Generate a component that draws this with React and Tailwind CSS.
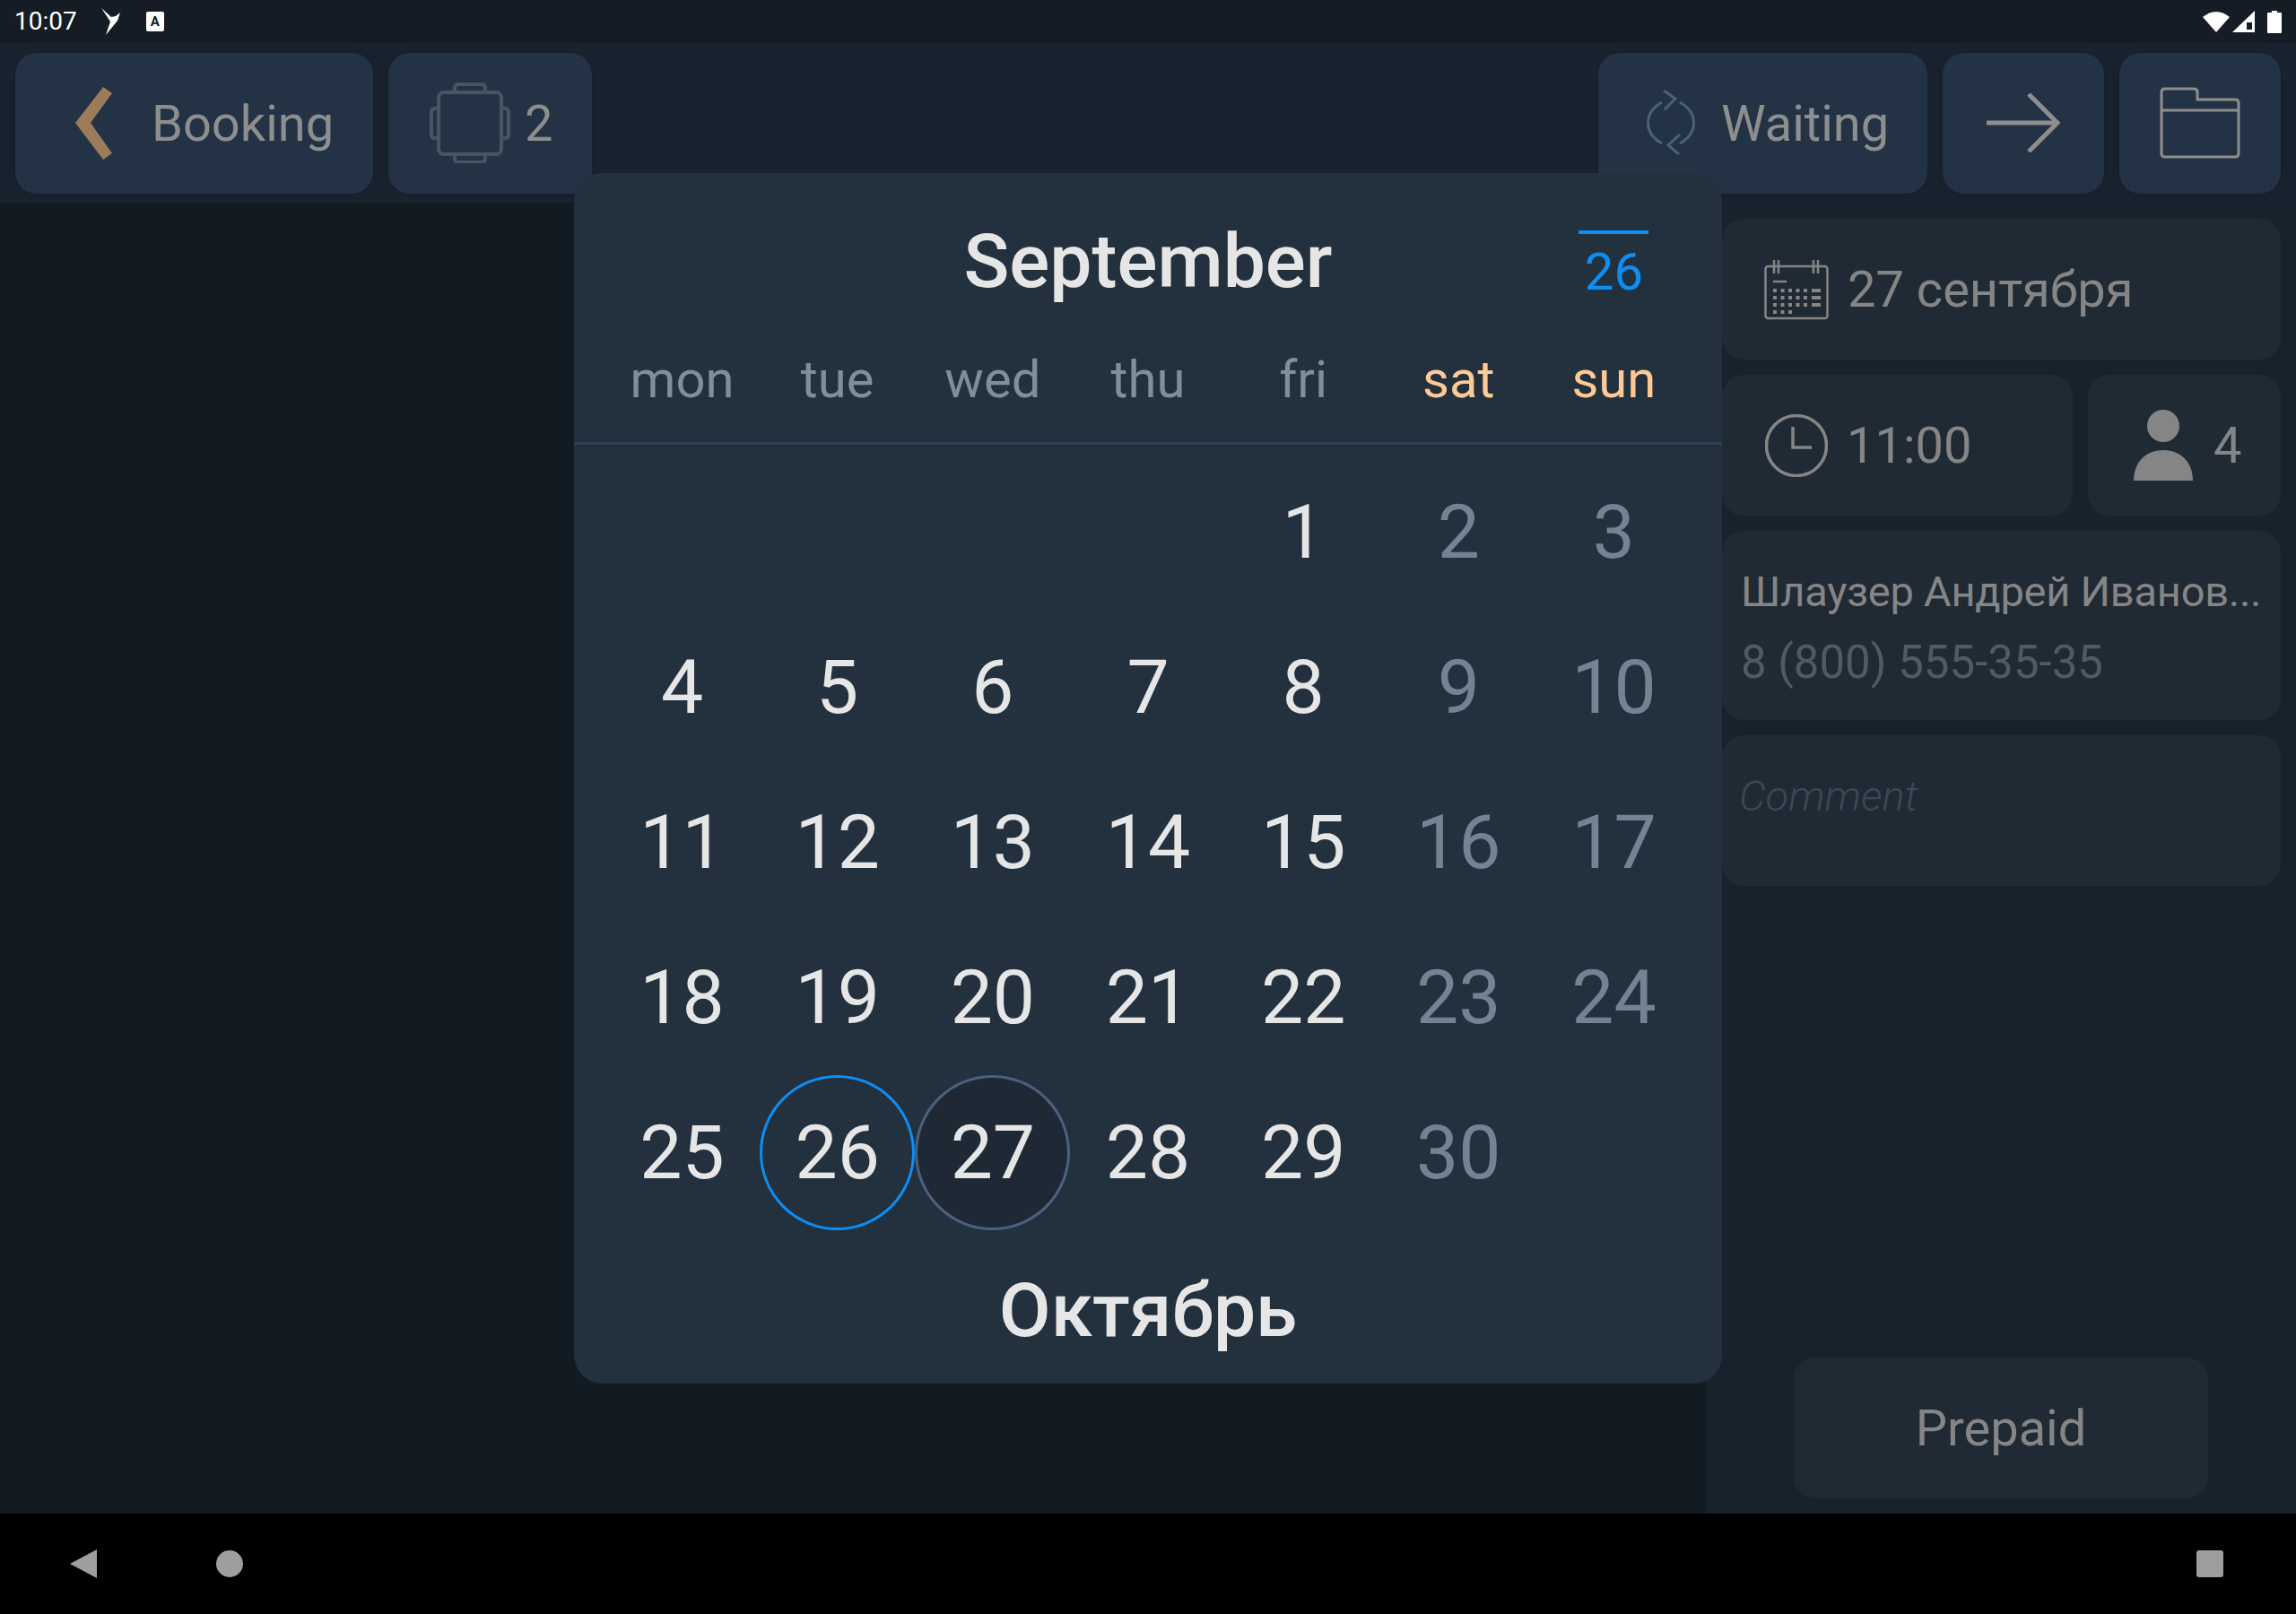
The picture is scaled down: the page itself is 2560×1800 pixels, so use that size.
const weekdays = ["mon", "tue", "wed", "thu", "fri", "sat", "sun"];

// september starts on friday, so four empty cells first
const days = [null, null, null, null];
for (let d = 1; d <= 30; d++) days.push(d);

function BirdIcon() {
  return (
    <svg width="22" height="30" viewBox="0 0 22 30" className="fill-white">
      <path d="M0 0 L11 10 L16 9 L21 5 L18 14 L5 30 L10 15 Z" />
    </svg>
  );
}

function KeyboardBadge() {
  return (
    <div className="flex h-[22px] w-[20px] items-center justify-center rounded-[2px] bg-white text-[15px] leading-none font-bold text-[#151c26]">
      A
    </div>
  );
}

function WifiIcon() {
  return (
    <svg width="30" height="24" viewBox="0 0 30 24" className="fill-white">
      <path d="M15 24 L0 7 Q15 -5 30 7 Z" />
    </svg>
  );
}

function SignalIcon() {
  return (
    <svg width="25" height="24" viewBox="0 0 25 24">
      <path d="M25 0 V24 H0 Z" fill="#fff" />
      <path d="M16 13 H22 V21 H16 Z" fill="#151c26" />
    </svg>
  );
}

function BatteryIcon() {
  return (
    <svg width="16" height="25" viewBox="0 0 16 25" className="fill-white">
      <path d="M5 0 H11 V2 H15 Q16 2 16 3 V24 Q16 25 15 25 H1 Q0 25 0 24 V3 Q0 2 1 2 H5 Z" />
    </svg>
  );
}

function ChevronIcon() {
  return (
    <svg width="41" height="81" viewBox="0 0 41 81" className="fill-[#9b7b5a]">
      <path d="M31 0 L41 7 L17 40 L41 74 L31 81 L0 40 Z" />
    </svg>
  );
}

function TableIcon() {
  return (
    <svg width="90" height="90" viewBox="0 0 90 90" fill="none" stroke="#4a5364" strokeWidth="4">
      <rect x="10" y="11" width="70" height="69" rx="6" />
      <path d="M28 10 V6 Q28 2 32 2 H58 Q62 2 62 6 V10" />
      <path d="M28 81 V85 Q28 89 32 89 H58 Q62 89 62 85 V81" />
      <path d="M9 29 H6 Q2 29 2 33 V58 Q2 62 6 62 H9" />
      <path d="M81 29 H84 Q88 29 88 33 V58 Q88 62 84 62 H81" />
    </svg>
  );
}

function SyncIcon() {
  return (
    <svg width="54" height="74" viewBox="0 0 54 74" fill="none" stroke="#4a6078" strokeWidth="3">
      <path d="M17 14 C-3.7 26 -3.7 48 17 60" />
      <path d="M37 14 C57.7 26 57.7 48 37 60" />
      <path d="M19 1 L32 10 L20 22" />
      <path d="M37 50 L24 62 L36 72" />
    </svg>
  );
}

function ArrowIcon() {
  return (
    <svg width="82" height="66" viewBox="0 0 82 66" fill="none" stroke="#8e8e8e" strokeWidth="5">
      <path d="M0 33 H78" />
      <path d="M47 1 L79 33 L47 65" />
    </svg>
  );
}

function FolderIcon() {
  return (
    <svg width="90" height="80" viewBox="0 0 90 80" fill="none" stroke="#8e8e8e" strokeWidth="3">
      <path d="M2 6 Q2 2 6 2 H38 Q42 2 42 6 V14 H84 Q88 14 88 18 V74 Q88 78 84 78 H6 Q2 78 2 74 Z" />
      <path d="M2 26 H88" />
    </svg>
  );
}

function CalendarIcon() {
  const rows = [0, 1, 2];
  const cols = [0, 1, 2, 3, 4];
  return (
    <svg width="72" height="68" viewBox="0 0 72 68" fill="none" stroke="#858585" strokeWidth="2.5">
      <rect x="1.5" y="8" width="69" height="58" rx="3" />
      <path d="M11 1 V16 M16 1 V16 M55 1 V16 M60 1 V16" />
      <path d="M10 25 H25" />
      {rows.map((r) =>
        cols.map((c) => (
          <rect key={`${r}-${c}`} x={10 + c * 8.5} y={33 + r * 8} width="4" height="4" fill="#858585" stroke="none" />
        ))
      )}
      {rows.map((r) => (
        <rect key={r} x="53" y={33 + r * 8} width="10" height="4" fill="#858585" stroke="none" />
      ))}
      {[0, 1, 2].map((c) => (
        <rect key={c} x={10 + c * 8.5} y="57" width="4" height="4" fill="#858585" stroke="none" />
      ))}
    </svg>
  );
}

function ClockIcon() {
  return (
    <svg width="70" height="70" viewBox="0 0 70 70" fill="none" stroke="#858585" strokeWidth="3.5">
      <circle cx="35" cy="35" r="33.5" />
      <path d="M31 14 V37 H52" />
    </svg>
  );
}

function PersonIcon() {
  return (
    <svg width="66" height="79" viewBox="0 0 66 79" className="fill-[#858585]">
      <ellipse cx="33" cy="18" rx="18" ry="18" />
      <path d="M0 79 C0 58 14 45 33 45 C52 45 66 58 66 79 Z" />
    </svg>
  );
}

function TopButton({ className, children }) {
  return (
    <div className={`flex h-[157px] items-center rounded-[24px] bg-[#233345] text-[56px] text-[#8e8e8e] shadow-[0_0_8px_rgba(0,0,0,0.15)] ${className}`}>
      {children}
    </div>
  );
}

function Day({ day, index }) {
  if (day === null) return <div className="h-[173px]" />;
  // saturday and sunday columns are dimmed
  const weekend = index % 7 >= 5;
  let ring = "";
  if (day === 26) ring = "border-[3px] border-[#0d8ef5]";
  if (day === 27) ring = "border-[3px] border-[#4a6280] bg-[#1f2935]";
  return (
    <div className={`flex h-[173px] items-center justify-center rounded-full text-[84px] ${weekend ? "text-[#748394]" : "text-[#e6e6e6]"} ${ring}`}>
      {day}
    </div>
  );
}

export default function App() {
  return (
    <div className="relative flex h-[1800px] w-[2560px] flex-col overflow-hidden bg-black font-['Roboto',sans-serif]">
      {/* status bar */}
      <div className="flex h-[48px] items-center bg-[#151c26] pr-[16px] pl-[16px] text-white">
        <span className="text-[28px]">10:07</span>
        <div className="ml-[27px]"><BirdIcon /></div>
        <div className="ml-[28px]"><KeyboardBadge /></div>
        <div className="ml-auto flex items-center gap-[3px]">
          <WifiIcon />
          <SignalIcon />
          <div className="ml-[11px]"><BatteryIcon /></div>
        </div>
      </div>

      {/* top bar */}
      <div className="flex h-[178px] items-center justify-between bg-[#18232f] px-[17px]">
        <div className="flex gap-[17px]">
          <TopButton className="w-[399px] pl-[67px]">
            <ChevronIcon />
            <span className="ml-[44px] pt-[2px]">Booking</span>
          </TopButton>
          <TopButton className="w-[227px] pl-[46px]">
            <TableIcon />
            <span className="ml-[16px] pt-[2px]">2</span>
          </TopButton>
        </div>
        <div className="flex gap-[17px]">
          <TopButton className="w-[367px] pl-[54px]">
            <SyncIcon />
            <span className="ml-[29px] pt-[2px]">Waiting</span>
          </TopButton>
          <TopButton className="w-[180px] justify-center">
            <ArrowIcon />
          </TopButton>
          <TopButton className="w-[180px] justify-center">
            <FolderIcon />
          </TopButton>
        </div>
      </div>

      {/* content */}
      <div className="flex h-[1462px]">
        <div className="w-[1902px] bg-[#121a22]" />
        <div className="flex flex-1 flex-col bg-[#18222c] pt-[18px] pl-[18px] text-[#858585]">
          <div className="flex h-[157px] w-[623px] items-center rounded-[24px] bg-[#202a35] pl-[47px] text-[56px]">
            <CalendarIcon />
            <span className="ml-[21px]">27 сентября</span>
          </div>
          <div className="mt-[17px] flex w-[623px] gap-[17px] text-[56px]">
            <div className="flex h-[157px] w-[391px] items-center rounded-[24px] bg-[#202a35] pl-[48px]">
              <ClockIcon />
              <span className="ml-[21px]">11:00</span>
            </div>
            <div className="flex h-[157px] w-[215px] items-center rounded-[24px] bg-[#202a35] pl-[51px]">
              <PersonIcon />
              <span className="ml-[23px]">4</span>
            </div>
          </div>
          <div className="mt-[17px] flex h-[211px] w-[623px] flex-col justify-center gap-[7px] rounded-[24px] bg-[#202a35] pt-[3px] pl-[21px] leading-[72px]">
            <span className="text-[47px] tracking-[-0.25px]">Шлаузер Андрей Иванов...</span>
            <span className="text-[51px] text-[#4f5a64]">8 (800) 555-35-35</span>
          </div>
          <div className="mt-[17px] h-[168px] w-[623px] rounded-[24px] bg-[#202a35] pt-[32px] pl-[19px] text-[47px] leading-[72px] font-light text-[#3c4855] italic">
            Comment
          </div>
          <div className="mt-auto mb-[17px] ml-[80px] flex h-[157px] w-[462px] items-center justify-center rounded-[24px] bg-[#202a35] text-[56px]">
            Prepaid
          </div>
        </div>
      </div>

      {/* android nav */}
      <div className="flex h-[112px] items-center bg-black pr-[81px] pl-[78px]">
        <svg width="30" height="32" viewBox="0 0 30 32" className="fill-[#9e9e9e]">
          <path d="M30 0 V32 L0 16 Z" />
        </svg>
        <div className="ml-[133px] h-[30px] w-[30px] rounded-full bg-[#9e9e9e]" />
        <div className="ml-auto h-[30px] w-[30px] rounded-[3px] bg-[#9e9e9e]" />
      </div>

      {/* date picker dialog */}
      <div className="absolute top-[193px] left-[640px] h-[1350px] w-[1280px] rounded-[32px] bg-[#23313f]">
        <div className="grid h-[194px] grid-cols-7 px-[34px]">
          <div className="col-span-5 col-start-2 flex items-center justify-center pt-[3px] text-[84px] font-medium text-[#e6e6e6]">
            September
          </div>
          <div className="flex flex-col items-center pt-[64px]">
            <div className="h-[4px] w-[78px] bg-[#0d8ef5]" />
            <span className="mt-[13px] text-[58px] leading-none text-[#0d8ef5]">26</span>
          </div>
        </div>
        <div className="grid h-[109px] grid-cols-7 border-b-[3px] border-[#2f3f52] px-[34px] text-[58px]">
          {weekdays.map((w, i) => (
            <div key={w} className={`flex h-[72px] items-center justify-center ${i >= 5 ? "text-[#ffc996]" : "text-[#7f8d9c]"}`}>
              {w}
            </div>
          ))}
        </div>
        <div className="mt-[11px] grid grid-cols-7 px-[34px]">
          {days.map((d, i) => (
            <Day key={i} day={d} index={i} />
          ))}
        </div>
        <div className="mt-[35px] text-center text-[84px] leading-[110px] font-medium text-[#e6e6e6]">
          Октябрь
        </div>
      </div>
    </div>
  );
}
